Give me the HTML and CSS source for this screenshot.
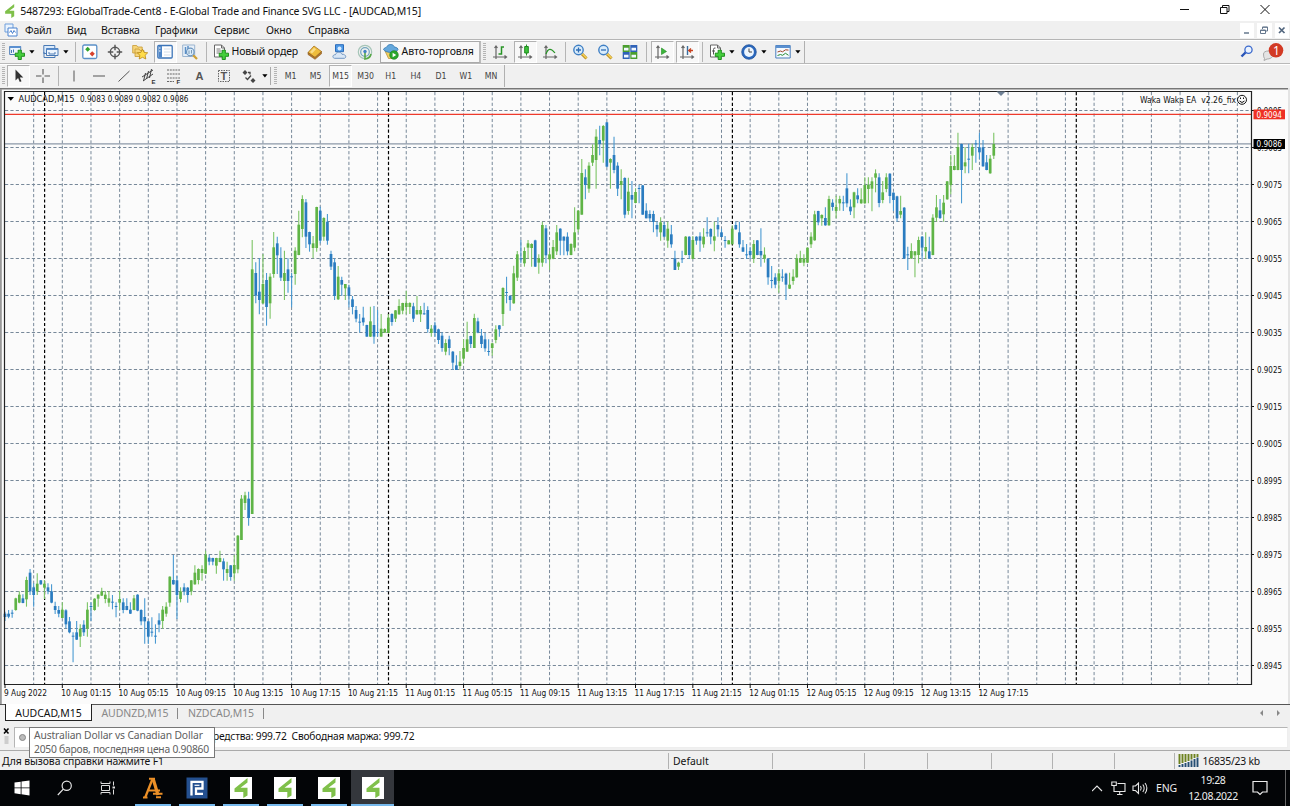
FILE: index.html
```html
<!DOCTYPE html>
<html lang="ru">
<head>
<meta charset="utf-8">
<title>EGlobalTrade-Cent8</title>
<link rel="stylesheet" href="styles.css">
</head>
<body>
<svg class="defs" width="0" height="0">
  <symbol id="logo" viewBox="0 0 22 22"><path d="M17.500 1 4.500 11.500v3.500h8.800v6l4.200-2.500V10.800H10.500l7-5.300z" fill="#7fc04a"/></symbol>
  <symbol id="arrow" viewBox="0 0 6 4"><path d="M0.300 0.300h5.200L2.900 3.600z" fill="#000"/></symbol>
  <symbol id="plus" viewBox="0 0 10 10"><path d="M3.500 .5h3v3h3v3h-3v3h-3v-3h-3v-3h3z" fill="#45cf3c" stroke="#178a17" stroke-width=".9"/></symbol>
  <symbol id="axes" viewBox="0 0 16 16"><path d="M4 2v13M1 13h13M2.500 4 4 2l1.500 2M12.500 11.500l2 1.500-2 1.500" fill="none" stroke="#666" stroke-width="1.200"/></symbol>
  <symbol id="lens" viewBox="0 0 16 16"><path d="m10 10 4.500 4.500" stroke="#b88a1c" stroke-width="3"/><path d="m10.200 9.800 4.300 4.300" stroke="#f3cf55" stroke-width="1.500"/><circle cx="6.500" cy="6" r="4.700" fill="#d9ecfb" stroke="#3f7fc4" stroke-width="1.400"/></symbol>
  <symbol id="doc" viewBox="0 0 16 16"><path d="M1.500 1h7l3 3v9h-10z" fill="#fff" stroke="#666"/><path d="M8.500 1v3h3" fill="none" stroke="#666"/></symbol>
</svg>

<header class="title">
  <svg class="title-logo" viewBox="0 0 22 22"><use href="#logo"/></svg>
  <span class="title-text">5487293: EGlobalTrade-Cent8 - E-Global Trade and Finance SVG LLC - [AUDCAD,M15]</span>
  <svg class="win-buttons" viewBox="0 0 120 21" fill="none" stroke="#111"><path d="M10 9.500h9M90.500 5l9 9M99.500 5l-9 9"/><path d="M50.500 7.500h6.500v6h-6.500zM52.500 7.500V5.500H59V11.500h-2"/></svg>
</header>

<nav class="menu">
  <svg class="menu-icon" viewBox="0 0 14 14"><path d="M1 1h8v8H1z" fill="#eaf3fd" stroke="#6f9fdc"/><path d="M4 5h9v8H4z" fill="#fff" stroke="#4b82cf"/><path d="m5.500 9.500 1.500-2 1.500 3 1.500-3 1.500 2" fill="none" stroke="#4b82cf"/></svg>
  <span class="m-file">Файл</span><span class="m-view">Вид</span><span class="m-insert">Вставка</span><span class="m-charts">Графики</span><span class="m-tools">Сервис</span><span class="m-window">Окно</span><span class="m-help">Справка</span>
  <div class="mdi">
    <b><svg viewBox="0 0 14 14"><path d="M4 10h5" stroke="#66788e" stroke-width="1.500"/></svg></b>
    <b><svg viewBox="0 0 14 14" fill="none" stroke="#66788e"><path d="M3.500 7h5v3.500h-5zM3.500 7.500h5M5.500 6V4h5v4H9M5.500 4.300h5"/></svg></b>
    <b><svg viewBox="0 0 14 14"><path d="m4 4.500 5.500 5.500M9.500 4.500 4 10" stroke="#52667e" stroke-width="1.700"/></svg></b>
  </div>
</nav>

<div class="toolbar t1">
  <i class="grip"></i>
  <div class="tb w22"><svg viewBox="0 0 16 16"><path d="M.7 2.500h11v8h-11z" fill="#eef5fd" stroke="#4a7ab5"/><path d="M.7 2h11v2h-11z" fill="#5b90d0"/><path d="M2.500 6v3M4.500 5.500v3" stroke="#4a7ab5"/><use href="#plus" x="5.500" y="5.500" width="10.500" height="10.500"/></svg></div>
  <div class="arr w12"><svg><use href="#arrow"/></svg></div>
  <div class="tb w22"><svg viewBox="0 0 16 16"><path d="M.8 1.500h11v8h-11z" fill="#dcebfb" stroke="#4a7ab5"/><path d="M3.500 4.500h11.500v7H3.500z" fill="#eef5fd" stroke="#4a7ab5"/><path d="M3.500 4.500h11.500v1.500H3.500z" fill="#5b90d0"/><path d="M1 8v5.500h11v-2M6 8v2h6V8" stroke="#4a7ab5" fill="none"/></svg></div>
  <div class="arr w12"><svg><use href="#arrow"/></svg></div>
  <i class="sep w35"></i>
  <div class="tb"><svg viewBox="0 0 16 16"><rect x=".8" y="1" width="14" height="13.500" rx="1.500" fill="#fff" stroke="#5b90c8" stroke-width="1.300"/><path d="m5.700 2.800 2.500 2.500-2.500 2.500-2.500-2.500z" fill="#31a42b"/><path d="m10.200 7.200 2.600 2.600-2.600 2.600-2.600-2.600z" fill="#d8412c"/></svg></div>
  <div class="tb"><svg viewBox="0 0 16 16" fill="none" stroke="#555" stroke-width="1.400"><circle cx="8" cy="8" r="4.700"/><path d="M8 0.800v5.500M8 9.700v5.500M.8 8h5.500M9.700 8h5.500"/></svg></div>
  <div class="tb"><svg viewBox="0 0 16 16"><path d="M.7 1.500h4l1 1.500h4.500v6H.7zM3 5h4l1 1.500h4v6H3z" fill="#f6d57a" stroke="#c89a33" stroke-width=".8"/><path d="m10.500 5.200 1.600 3.200 3.600.4-2.600 2.500.7 3.700-3.300-1.700-3.300 1.700.7-3.700-2.600-2.500 3.600-.4z" fill="#ffdc4a" stroke="#b88818" stroke-width=".8"/></svg></div>
  <div class="tb on"><svg viewBox="0 0 16 16"><rect x=".8" y="1.500" width="14.400" height="12.500" rx="1" fill="#fff" stroke="#3d75b8" stroke-width="1.300"/><path d="M1.500 2h3.500v11.500H1.500z" fill="#4f86c8"/><path d="M7 5h6.500M7 8h6.500M7 11h6.500" stroke="#d5dfea"/><path d="M2 4h1.500M2 7h1.500" stroke="#fff"/></svg></div>
  <div class="tb"><svg viewBox="0 0 16 16"><path d="M.7 1h12v11.500H.7z" fill="#e8f0f8" stroke="#9ab4cf"/><path d="M3.500 3v7M6 2v6" stroke="#5b90c8" stroke-width="1.500"/><path d="m11 11 4 4" stroke="#cfa033" stroke-width="2.300"/><circle cx="8.300" cy="8" r="3.800" fill="#d9ecfb" stroke="#6a93bd" stroke-width="1.200"/><path d="M7 6.500V10M9.500 6v3.500" stroke="#7b98b3"/></svg></div>
  <i class="sep w7"></i>
  <div class="tb w22"><svg viewBox="0 0 16 16"><use href="#doc" width="16" height="16"/><path d="M3.500 5h4M3.500 7h5M3.500 9h3" stroke="#777"/><use href="#plus" x="5.500" y="5.500" width="10.500" height="10.500"/></svg></div>
  <span class="order">Новый ордер</span>
  <div class="tb"><svg viewBox="0 0 16 16"><path d="M1 8.500 7 2l7.500 5.500-6.500 6z" fill="#eebd3d" stroke="#a87420" stroke-width=".8"/><path d="m1 8.500 7 5 6.500-6v2.300L8 15.300 1 10.500z" fill="#b5782a" stroke="#8a5a1c" stroke-width=".6"/><path d="m3 8 4-4.200 2 1.400-4 4.200z" fill="#f9dd8a"/></svg></div>
  <div class="tb"><svg viewBox="0 0 16 16"><path d="M3.500.7h8v7h-8z" fill="#4f9ae6" stroke="#2b6cba"/><circle cx="7.500" cy="4.500" r="2" fill="#d7ebff"/><path d="M2.500 14.300c-3-.8-1.300-4 .8-3.500 1-3.400 6-3.200 6.700-.5 2.600-.6 5.500 2.600 2.500 4z" fill="#d9e7f6" stroke="#7297c2"/></svg></div>
  <div class="tb"><svg viewBox="0 0 16 16" fill="none" stroke-width="1.200"><circle cx="8" cy="8" r="6.700" stroke="#a6c5b8"/><circle cx="8" cy="8" r="4.300" stroke="#71a5bb"/><path d="M8 8v7q5-.5 6-5" stroke="#57a846" stroke-width="1.600"/><circle cx="8" cy="7.500" r="1.700" fill="#4182c4" stroke="none"/></svg></div>
  <div class="auto"><svg viewBox="0 0 16 16"><path d="m2 7 3.500 7.500h5L14 7z" fill="#f1cf63" stroke="#b28a2c" stroke-width=".7"/><path d="M.5 5.500c1-2.500 3-1.500 3.500-3 1.500-3 6.500-2.300 7 0 .7 1.300 3.500.2 4 3-1 3.500-12 4.200-14.500 0z" fill="#65a8dc" stroke="#2f74ad" stroke-width=".8"/><circle cx="11" cy="11" r="4.300" fill="#2aa72d" stroke="#168019" stroke-width=".6"/><path d="m9.600 8.700 3.600 2.300-3.600 2.300z" fill="#fff"/></svg><span>Авто-торговля</span></div>
  <i class="grip mid"></i>
  <div class="tb"><svg viewBox="0 0 16 16"><use href="#axes"/><path d="M6.500 10h3V3h2.500" stroke="#279425" fill="none" stroke-width="1.500"/></svg></div>
  <div class="tb on"><svg viewBox="0 0 16 16"><use href="#axes"/><path d="M9.500.500v11" stroke="#279425"/><path d="M7.700 2.500h3.600v6.500H7.700z" fill="#3fc23b" stroke="#1f8a1f"/></svg></div>
  <div class="tb"><svg viewBox="0 0 16 16"><use href="#axes"/><path d="M4 10c2-6 5-6 9-1" stroke="#279425" fill="none" stroke-width="1.200"/></svg></div>
  <i class="sep w5"></i>
  <div class="tb"><svg viewBox="0 0 16 16"><use href="#lens"/><path d="M4 6h5M6.500 3.500v5" stroke="#2f6db5" stroke-width="1.300"/></svg></div>
  <div class="tb"><svg viewBox="0 0 16 16"><use href="#lens"/><path d="M4 6h5" stroke="#2f6db5" stroke-width="1.300"/></svg></div>
  <div class="tb"><svg viewBox="0 0 16 16"><path d="M.7 1h7v7h-7zM8.300 8h7v7h-7z" fill="#4a9e2e"/><path d="M8.300 1h7v7h-7zM.7 8h7v7h-7z" fill="#2f62b8"/><path d="M2 3.700h4.500v2.800H2zM9.500 3.700H14v2.800H9.500zM2 10.700h4.500v2.800H2zM9.500 10.700H14v2.800H9.500z" fill="#f2f8ff"/></svg></div>
  <i class="sep w7"></i>
  <div class="tb on"><svg viewBox="0 0 16 16"><use href="#axes"/><path d="m7.500 4 5 3.500-5 3z" fill="#3bb53a" stroke="#1f8a1f" stroke-width=".6"/></svg></div>
  <div class="tb on"><svg viewBox="0 0 16 16"><use href="#axes"/><path d="M8.500 2v9" stroke="#3b6f9f" stroke-width="1.400"/><path d="M14 6.500h-4M12 4.500l-2.300 2 2.300 2" stroke="#c8411f" fill="none" stroke-width="1.300"/></svg></div>
  <i class="sep w65"></i>
  <div class="tb w22"><svg viewBox="0 0 16 16"><use href="#doc" width="16" height="16"/><path d="M6.500 4q-2-.5-2 1.500v5M3 7h3" stroke="#555" fill="none"/><use href="#plus" x="5.500" y="5.500" width="10.500" height="10.500"/></svg></div>
  <div class="arr w10"><svg><use href="#arrow"/></svg></div>
  <div class="tb w22"><svg viewBox="0 0 16 16"><circle cx="8" cy="8" r="7.300" fill="#2b68bd" stroke="#1d4d95" stroke-width=".7"/><circle cx="8" cy="8" r="4.900" fill="#edf6ff"/><path d="M8 4.500V8h3" stroke="#444" fill="none"/></svg></div>
  <div class="arr w12"><svg><use href="#arrow"/></svg></div>
  <div class="tb w22"><svg viewBox="0 0 16 16"><path d="M.8 1.500h14.400v12.500H.8z" fill="#f5faff" stroke="#4b7fbd"/><path d="M.8 1.500h14.400v2.500H.8z" fill="#5b90d0"/><path d="m2.500 8 3-1 2 .8 3-2 3 .3" stroke="#a04328" fill="none"/><path d="m2.500 11.500 3-1 2 .8 3-2 3 2" stroke="#278b34" fill="none"/></svg></div>
  <div class="arr w10"><svg><use href="#arrow"/></svg></div>
  <i class="end"></i>
  <svg class="alerts" viewBox="0 0 50 24"><path d="m2.500 16.500 5-5" stroke="#2a55b8" stroke-width="2.400"/><circle cx="9.500" cy="9.700" r="3.600" fill="#eaf3ff" stroke="#3b69cc" stroke-width="1.300"/><path d="M24.500 14c0-4 9-4 9.500 0s-4 5-6 5l-3 1.500 .5-2q-1-1-1-4.500z" fill="#e4e4e4" stroke="#aaa"/><circle cx="37" cy="10.300" r="7.300" fill="#d23a24"/><text x="34" y="14.600" font-size="12" fill="#fff">1</text></svg>
</div>

<div class="toolbar t2">
  <i class="grip"></i>
  <div class="tb on"><svg viewBox="0 0 16 16"><path d="M4.500 1.500v11l2.600-2.400 1.700 4 1.700-.8-1.700-3.800h3.500z" fill="#333"/></svg></div>
  <div class="tb"><svg viewBox="0 0 16 16" stroke="#555" stroke-width="1.100"><path d="M8 1v5.500M8 9.500V15M1 8h5.500M9.500 8H15"/></svg></div>
  <i class="sep w6"></i>
  <div class="tb"><svg viewBox="0 0 16 16" stroke="#555"><path d="M8 2.500v11"/></svg></div>
  <div class="tb"><svg viewBox="0 0 16 16" stroke="#555"><path d="M2 8h12"/></svg></div>
  <div class="tb"><svg viewBox="0 0 16 16" stroke="#555"><path d="M2.500 13.500 13.500 3"/></svg></div>
  <div class="tb"><svg viewBox="0 0 16 16" stroke="#444" fill="none"><path d="m1 9 11-7M2 13l10-7M4.500 5l-2 8M7.500 3l-2 8M10.500 1l-2 9"/><text x="10.500" y="15.500" class="sub">E</text></svg></div>
  <div class="tb"><svg viewBox="0 0 16 16" stroke="#666" fill="none"><path d="M1 2h13M1 6h13M1 10h13M1 13.500h7" stroke-dasharray="2 .8"/><text x="10.500" y="16" class="sub">F</text></svg></div>
  <div class="tb"><svg viewBox="0 0 16 16"><text x="4.500" y="12.300" class="glyph">A</text></svg></div>
  <div class="tb"><svg viewBox="0 0 16 16"><path d="M2.500 2.500h11v11h-11z" fill="none" stroke="#666" stroke-dasharray="1.500 1"/><text x="4.600" y="12" class="glyph">T</text></svg></div>
  <div class="tb"><svg viewBox="0 0 16 16"><path d="m4 2 2.500 2.500L4 7 1.500 4.500zM12 10l2.500 2.500L12 15l-2.500-2.500z" fill="#444"/><path d="m4.500 9.500 2 2 3.500-4M7 4.500h2v2" stroke="#444" fill="none" stroke-width="1.300"/></svg></div>
  <div class="arr w9"><svg><use href="#arrow"/></svg></div>
  <i class="grip tf"></i>
  <span>M1</span><span>M5</span><span class="on">M15</span><span>M30</span><span>H1</span><span>H4</span><span>D1</span><span>W1</span><span>MN</span>
  <i class="end"></i>
</div>

<main class="chart"><svg id="chart" width="1290" height="616" viewBox="0 88 1290 616"></svg></main>

<div class="tabs">
  <span class="tab active">AUDCAD,M15</span><span class="tab second">AUDNZD,M15</span><span class="tab third">NZDCAD,M15</span>
  <svg class="tab-arrows" viewBox="0 0 30 10"><path d="M5 2v6L2 5zM19 2v6l3-3z" fill="#888"/></svg>
</div>

<section class="terminal">
  <svg class="close" viewBox="0 0 14 24"><path d="m4 1.500 4.500 5M8.500 1.500 4 6.500" stroke="#000" stroke-width="1.500"/><path d="M4.500 10h4M4.500 12h4M4.500 14h4M4.500 16h4" stroke="#aaa"/></svg>
  <div class="balance"><i class="dot"></i><span>редства: 999.72&nbsp; Свободная маржа: 999.72</span></div>
  <div class="tip"><span class="tip-a">Australian Dollar vs Canadian Dollar</span><span class="tip-b">2050 баров, последняя цена 0.90860</span></div>
</section>

<footer class="status">
  <span class="hint">Для вызова справки нажмите F1</span>
  <span class="cell profile">Default</span><i class="cell c1"></i><i class="cell c2"></i><i class="cell c3"></i><i class="cell c4"></i><i class="cell c5"></i><i class="cell c6"></i>
  <div class="cell net"><svg viewBox="0 0 22 13"><path d="M1.500 0v10M4.500 0v9M7.500 0v8M10.500 0v7M13.500 0v5.500M16.500 0v4M19.500 0v3" stroke="#6d8220" stroke-width="1.900"/><path d="M1.500 11v2M4.500 10v3M7.500 9v4M10.500 8v5M13.500 6.500V13M16.500 5v8M19.500 3.500V13" stroke="#244d73" stroke-width="1.900"/></svg><span>16835/23 kb</span></div>
</footer>

<div class="taskbar">
  <div class="task sys win"><svg viewBox="0 0 16 16" fill="#fff"><path d="M.5 2.600 6.700 1.700v5.800H.5zM7.500 1.600 15.500.4v7.100h-8zM.5 8.300h6.200v5.900L.5 13.300zM7.500 8.300h8v7.100l-8-1.100z"/></svg></div>
  <div class="task sys"><svg viewBox="0 0 16 16" fill="none" stroke="#e6e6e6" stroke-width="1.200"><circle cx="9.700" cy="5.700" r="4.600"/><path d="M6.300 9.200.8 15"/></svg></div>
  <div class="task sys"><svg viewBox="0 0 16 16" fill="none" stroke="#ddd"><path d="M1 1.500v2h9v-2M1 14.500v-2h9v2M1.500 5.500h8v5h-8zM13.500 1.500v4M13.500 9.500v5"/><path d="M12.500 7.500h2.500" stroke-width="2"/></svg></div>
  <div class="task run"><svg class="big" viewBox="0 0 22 22" fill="none" stroke="#ec9027"><path d="M1 20.500h4.500M7 1.800h6" stroke-width="2"/><path d="M3.200 20.500 10.300 2.500" stroke-width="2.300"/><path d="M11.200 2 16 18" stroke-width="3.200"/><path d="M7 13.500h11M11 16.800h9.500M14 20.300h5" stroke-width="1.900"/></svg></div>
  <div class="task run"><svg class="big" viewBox="0 0 22 22"><path d="M.5.500h21v21H.5z" fill="#24508f"/><path d="M5.500 18.500V4.800h11v6.700h-6.500v5.300H17" fill="none" stroke="#fff" stroke-width="2.300"/><path d="M8.500 8.300h5" stroke="#fff" stroke-width="1.200"/></svg></div>
  <div class="task run"><svg class="big white" viewBox="0 0 22 22"><use href="#logo"/></svg></div>
  <div class="task run"><svg class="big white" viewBox="0 0 22 22"><use href="#logo"/></svg></div>
  <div class="task run"><svg class="big white" viewBox="0 0 22 22"><use href="#logo"/></svg></div>
  <div class="task run current"><svg class="big white" viewBox="0 0 22 22"><use href="#logo"/></svg></div>
  <div class="tray">
    <svg class="tray-icons" viewBox="0 0 62 20" fill="none" stroke="#e6e6e6" stroke-width="1.100"><path d="m0 13 5-5 5 5"/><path d="M25.500 5.500H33v8H22v-4M25 16.500h5.500M27.700 13.500v3M19.800 4h4.500v3.500h-4.500zM22 7.500v2"/><path d="M41 8h2.500L46.500 5v10.500L43.500 12.500H41zM48.500 8q1.500 2.200 0 4.500M50.800 6.500q2.800 3.800 0 7.500M53 5q3.800 5 0 10.500"/></svg>
    <span class="lang">ENG</span>
    <div class="clock"><span>19:28</span><span>12.08.2022</span></div>
    <svg class="note" viewBox="0 0 16 16" fill="none" stroke="#eee" stroke-width="1.200"><path d="M1 1.500h14v10.500h-4.500L8 14.500 5.500 12H1z"/></svg>
  </div>
</div>
<script src="chart.js"></script>
</body>
</html>
```
FILE: styles.css
```css
* { box-sizing: border-box; }
body { margin: 0; width: 1290px; height: 806px; overflow: hidden; display: flex; flex-direction: column; background: #f0f0f0; color: #111; font-family: "Noto Sans", "Open Sans", sans-serif; font-size: 10.5px; }
span { white-space: nowrap; }
.defs { position: absolute; }
.title { height: 21px; flex: none; background: #fff; display: flex; align-items: center; }
.title-logo { width: 16px; height: 16px; margin-left: 2px; }
.title-text { margin-left: 3px; width: 402px; font-size: 10.5px; letter-spacing: -0.155px; color: #111; }
.win-buttons { width: 120px; height: 21px; margin-left: 749px; flex: none; }
.menu { height: 19px; flex: none; display: flex; align-items: center; border-bottom: 1px solid #b5b5b5; font-size: 10.5px; letter-spacing: -0.15px; }
.menu-icon { width: 14px; height: 14px; margin-left: 4px; margin-right: 7px; }
.m-file { width: 42px; } .m-view { width: 34px; } .m-insert { width: 54px; } .m-charts { width: 59px; } .m-tools { width: 52px; } .m-window { width: 42px; } .m-help { width: 60px; }
.mdi { margin-left: auto; display: flex; gap: 3px; padding-right: 1px; }
.mdi b { width: 14.500px; height: 15px; background: #fff; }
.mdi svg { width: 14px; height: 14px; display: block; }
.toolbar { flex: none; display: flex; align-items: center; border-top: 1px solid #fff; }
.t1 { height: 24px; border-bottom: 1px solid #b9b9b9; }
.t2 { height: 24px; padding-bottom: 1px; }
.grip { flex: none; width: 6px; height: 18px; background: repeating-linear-gradient(#b4b4b4 0 1px, #f0f0f0 1px 2px) 2px 0 / 3px 100% no-repeat; }
.grip.mid { width: 6.500px; }
.grip.tf { width: 8px; border-left: 1px solid #aaa; background-position: 3px 0; }
.tb { flex: none; width: 25px; height: 22px; display: flex; align-items: center; justify-content: center; }
.tb svg { width: 16px; height: 16px; }
.tb.on { border: 1px solid #b2b2b2; border-right-color: #fff; border-bottom-color: #fff; background: #f8f8f8; width: 23px; margin: 0 1px; }
.arr { flex: none; display: flex; align-items: center; padding-left: 1px; }
.arr svg { width: 6px; height: 4px; }
.w22 { width: 22px; } .w12 { width: 12px; } .w10 { width: 10px; } .w9 { width: 9px; } .w7 { width: 7px; } .w5 { width: 5px; } .w6 { width: 6px; } .w65 { width: 6.500px; } .w35 { width: 3.500px; }
.sep { flex: none; height: 20px; background: linear-gradient(#b5b5b5, #b5b5b5) center / 1px 100% no-repeat; }
.order { width: 71px; font-size: 10.500px; letter-spacing: -.15px; margin-top: -2px; }
.auto { flex: none; width: 101.500px; margin-left: 2px; height: 22px; border: 1px solid #aaa; border-right: 2px solid #bbb; background: #f8f8f8; display: flex; align-items: center; }
.auto svg { width: 16px; height: 16px; margin-left: 2px; margin-right: 3px; }
.auto span { font-size: 10.500px; margin-top: -2px; letter-spacing: -.05px; }
.end { width: 1px; height: 22px; background: #b0b0b0; }
.alerts { width: 50px; height: 24px; margin-left: 434px; flex: none; }
.t2 > span { width: 23px; margin: 0 1.040px; height: 22px; text-align: center; font: 8.700px/22px "DejaVu Sans", sans-serif; font-stretch: condensed; color: #444; }
.t2 > span.on { border: 1px solid #b2b2b2; border-right-color: #fff; border-bottom-color: #fff; background: #f8f8f8; line-height: 20px; }
.t2 .tb.on { margin-right: 0; margin-left: 1px; }
.sub { font: bold 6px "Liberation Sans", sans-serif; fill: #333; stroke: none; }
.glyph { font: bold 11px "Liberation Sans", sans-serif; fill: #555; }
.chart { height: 616px; flex: none; }
.chart svg { display: block; }
.chart text { font-family: "DejaVu Sans"; font-stretch: condensed; font-size: 8.700px; fill: #111; }
.tabs { flex: none; height: 20px; display: flex; align-items: flex-start; border-top: 1.500px solid #555; position: relative; padding-left: 5px; margin-bottom: 3px; }
.tab { height: 16px; line-height: 17px; color: #888; font-size: 10.500px; letter-spacing: -.05px; text-align: center; }
.tab.active { width: 87px; background: #fff; border: 1.500px solid #222; border-top: 0; color: #111; line-height: 18px; height: 17px; margin-top: -1px; }
.tab.second, .tab.third { width: 86px; background: linear-gradient(#888, #888) right 3px / 1px 11px no-repeat; }
.tab-arrows { width: 30px; height: 10px; margin-left: auto; margin-top: 3px; margin-right: 2px; }
.terminal { flex: none; height: 24px; display: flex; position: relative; border-bottom: 1px solid #aaa; }
.close { width: 14px; height: 24px; flex: none; }
.balance { width: 1274px; height: 21px; background: #fff; border: 1px solid #b5b5b5; border-right-color: #eee; border-bottom-color: #eee; display: flex; align-items: center; font-size: 10.200px; }
.dot { width: 7px; height: 7px; border-radius: 50%; border: 1.500px solid #888; background: #bbb; margin-left: 4px; }
.balance span { margin-left: 187px; margin-top: -3px; letter-spacing: -.18px; }
.tip { position: absolute; left: 29px; top: 0; width: 186px; height: 31px; background: #fff; border: 1px solid #777; display: flex; flex-direction: column; line-height: 13.500px; padding: 1px 4px; color: #606060; font-size: 10.300px; z-index: 2; }
.tip-a { letter-spacing: -.13px; }
.tip-b { letter-spacing: -.23px; }
.status { flex: none; height: 19px; display: flex; align-items: center; font-size: 10.400px; }
.hint { width: 668px; padding-left: 2px; letter-spacing: -.1px; }
.cell { height: 16px; line-height: 16px; border-left: 1.500px solid #b2b2b2; }
.profile { width: 104px; padding-left: 4px; } .c1 { width: 92px; } .c2 { width: 63px; } .c3 { width: 64px; } .c4 { width: 61px; } .c5 { width: 62px; } .c6 { width: 59.500px; }
.net { display: flex; align-items: center; letter-spacing: -.25px; }
.net svg { width: 22px; height: 13px; margin: 0 3px; }
.taskbar { flex: none; height: 36px; background: #030507; display: flex; align-items: stretch; }
.task { width: 44px; display: flex; align-items: center; justify-content: center; }
.task.sys { width: 43.500px; }
.task.win { width: 43px; }
.task svg { width: 16px; height: 16px; }
.task svg.big { width: 22px; height: 22px; }
.task svg.white { background: #fff; }
.task.run { background: linear-gradient(#76b9ed, #76b9ed) center bottom / 36px 2px no-repeat; }
.task.current { background: linear-gradient(#76b9ed, #76b9ed) center bottom / 43px 2px no-repeat, #34373c; width: 43px; }
.task:nth-child(4) { margin-left: 1px; }
.tray { margin-left: auto; display: flex; align-items: center; color: #eee; border-right: 1px solid #666; width: 194px; margin-right: 4px; font-size: 10.500px; }
.tray-icons { width: 62px; height: 20px; }
.lang { width: 29px; margin-left: 2px; letter-spacing: -.2px; }
.clock { display: flex; flex-direction: column; align-items: center; line-height: 16px; width: 56px; letter-spacing: -.4px; margin-top: -1px; }
.note { width: 16px; height: 16px; margin-left: 11px; }
```
FILE: chart.js
```js
// Candles: direction, high, body top, body bottom, low; v is in thirds of a pixel below y0.
const blocks = [
  [0, 540, `b215,221,231,243 b210,221,230,235 b209,218,221,233 g173,175,210,212 g154,164,188,190 b163,175,189,190 g110,120,178,200 b87,98,154,165 b130,142,165,200 g100,131,154,165 b120,121,133,134 g120,131,143,177 b130,142,154,163 b133,154,188,190 b185,198,210,222 b198,210,221,232 g187,209,234,235 b208,211,253,265 b231,244,277,280 b277,287,290,367 b243,277,299,300 g253,266,290,321 b241,254,277,288 g187,209,266,290 b187,198,201,243 g175,176,210,212 g163,164,176,200 g143,154,167,168 g153,164,177,190 g153,175,188,200 b165,185,188,208 b187,198,201,232 g152,177,188,210 b175,187,210,220 b175,198,210,211 b187,209,221,222 g165,175,210,211 b163,164,212,214 b208,210,244,256 b175,231,244,311 b243,244,290,312 b232,275,278,290 b253,287,290,311 b220,241,254,277 g198,209,243,266 g187,200,221,230 g109,110,188,200 b45,120,133,134 b108,121,165,237 g142,154,177,187 b130,142,154,166 b141,143,165,188 g120,121,154,166 g76,98,133,134 g85,87,120,133 g76,87,99,122 g32,44,101,102 b43,53,65,76 b53,54,65,76 g53,54,77,101 g32,54,66,67 b55,64,88,122 g65,87,99,122 b75,76,111,122 g45,75,100,122`],
  [65, 380, `g465,467,568,580 g345,356,480,480 g335,346,369,390 b335,356,414,437`],
  [69, 180, `g180,268,1002,1002 b247,279,347,370 b235,335,360,403 g222,312,370,372 b279,300,381,437 g280,290,370,416 g156,202,282,293 b170,190,226,282 b202,234,293,303 g212,279,303,360 b235,268,303,338 b279,289,292,382 g202,212,282,314 g92,134,225,226 g46,57,147,172 b57,67,170,204 b155,156,193,215 g168,190,204,235 g80,81,204,215 b80,92,182,190 g112,114,170,182 b102,125,182,194 b212,222,260,270 b235,247,348,360 g258,290,358,360 b290,300,314,348 g312,312,325,360 b314,322,348,382 b348,358,381,403 b378,390,416,427 b402,425,428,458 b380,413,427,437 b434,435,470,470 g380,424,470,471 b378,435,470,491 b390,456,459,470 g402,446,470,470 g445,447,458,459 g402,413,459,459 b400,402,426,437 g390,391,416,426 g358,378,403,404 g368,369,392,403 g332,369,381,403 g367,369,381,402 b368,379,416,426 g348,390,403,404 g378,390,403,426 b368,400,403,404 b379,390,447,458 g435,446,459,470 b425,436,459,470 b446,448,480,492 b457,467,504,515 g478,489,515,526 b467,478,504,526 b513,515,548,570 b526,556,570,570 g513,545,558,570 g478,504,536,548`],
  [129, 200, `g365,418,455,455 b407,408,432,444 g341,354,444,444 b353,364,398,400 b387,407,432,444 b398,418,445,455 b418,453,456,467 g428,430,444,467 g376,388,420,430 b375,376,388,410 g262,264,342,378 b230,276,279,310 b285,288,300,332 g197,220,310,311 g153,163,233,243 b120,175,178,190 g142,153,190,200 g120,130,143,176 g130,132,144,200 b119,121,200,201 g163,175,188,221 g65,75,188,200 b75,85,166,190 g153,163,178,210 g120,141,176,178 g75,97,154,165 b85,86,122,166 b109,110,122,166 b97,110,154,166 g130,132,165,166 g22,97,143,154 g30,32,88,97`],
  [161, 110, `g147,189,314,314 b178,202,225,268 g157,167,236,248 g103,135,158,168 g58,80,150,236 b47,90,102,136 g45,48,92,158 b36,37,170,172 g145,147,158,236 b80,135,180,190 b157,167,236,258 g178,213,225,268 b202,204,314,325 g203,245,303,314 b213,255,269,325 g235,246,279,280 b224,234,237,280 b225,226,314,314 b280,302,325,325 b301,312,325,336 b302,312,336,367 b335,345,358,380 g322,337,367,392 b335,345,380,382 g335,356,392,413 b345,373,403,413 b422,445,480,480 g455,458,470,480 b422,445,448,459 g378,380,435,436 b379,380,435,447 g378,390,447,447 b379,380,392,404 b367,379,392,425 g355,380,403,413 b322,367,370,380 b355,357,380,403 g335,379,392,424 b322,345,358,380 b356,367,381,382 b378,390,393,413 g390,391,403,403 g346,356,403,403 b335,345,358,359 b335,367,403,413 b390,412,425,426 b402,433,436,447 b410,423,435,447 g390,402,446,459 b390,391,435,436`],
  [211, 160, `b205,273,286,320 g262,284,296,308 b294,296,352,374 b318,360,363,385 b340,352,374,385 g328,340,363,398 b328,350,353,365 b338,341,374,420 g338,374,386,387 g328,350,363,374 g283,295,352,353 g272,294,308,309 g283,295,308,319 g262,263,308,309 g217,230,253,264 g152,163,241,242 b152,153,187,196 g163,165,175,197 b142,174,196,197 g107,117,196,197 b118,128,141,152 g107,141,153,175 g107,117,130,152 b107,127,130,153 b40,85,130,142 b118,140,154,165 g95,97,142,175 b85,106,118,130 g85,118,130,131 g52,75,130,131 g52,74,87,130 g52,64,86,154 g28,40,53,97 b40,52,129,142 g63,97,120,130 g40,52,87,97 b40,41,108,130 b97,98,120,153 b107,109,175,185 g107,153,164,175 b141,143,296,297`],
  [252, 120, `b380,403,406,450 g370,393,415,417 g393,394,406,472 g350,360,405,430 b348,350,383,417 g337,381,394,417 b350,394,416,417 g283,293,405,406 g225,262,293,305 b237,271,294,297 g225,248,283,305 g183,184,238,239 g105,138,195,223 g105,138,150,151 g38,81,150,151 b71,72,150,250 g81,127,139,160 b71,116,119,160 g71,81,107,150 b60,70,73,128 b38,82,97,118 b60,82,139,140 b105,127,150,151 g105,116,160,161 g38,72,107,117`]
];
const barX = i => 5 + i * 3.5825;
let out = '<rect x="0" y="88" width="1290" height="616" fill="#fbfbfb"/>' +
  '<path d="M0 88.700H1289" stroke="#777" stroke-width="1.600"/><path d="M.8 89V704" stroke="#999" stroke-width="2"/><path d="M1289 88v616" stroke="#e4e4e4" stroke-width="2"/>';
const line = (x1, y1, x2, y2, attrs) => `<path d="M${x1} ${y1}L${x2} ${y2}" ${attrs}/>`;
const text = (x, y, s, w, extra = '') => `<text x="${x}" y="${y}" textLength="${w}" lengthAdjust="spacingAndGlyphs" ${extra}>${s}</text>`;
const dash = 'stroke-dasharray="3.2 2.17" stroke-width="1"';

for (let k = 0; k < 16; k++) {
  const y = 110.5 + k * 37;
  out += line(5, y, 1251, y, `stroke="#778899" ${dash}`) + line(1251, y, 1254, y, 'stroke="#111"');
  out += text(1257, (y + 3.2).toFixed(1), ((9095 - k * 10) / 10000).toFixed(4), 25);
}
for (let i = 8; barX(i) < 1250; i += 8) {
  out += line(barX(i), 92, barX(i), 684, `stroke="#778899" ${dash}`);
}
for (const x of [44.6, 388.5, 732.4, 1076.3]) {
  out += line(x, 92, x, 684, 'stroke="#000" stroke-width="1.200" stroke-dasharray="3.2 2.17"');
}
out += line(5, 143.9, 1251, 143.9, 'stroke="#8c99a8" stroke-width="1.200"');

for (const [start, y0, data] of blocks) {
  data.split(' ').forEach((c, k) => {
    const [hi, top, bot, lo] = c.slice(1).split(',').map(v => y0 + v / 3);
    const x = barX(start + k);
    const up = c[0] === 'g';
    out += line(x, hi, x, lo, `stroke="${up ? '#7cc465' : '#4a9ad2'}" stroke-width="1.100"`);
    out += `<rect x="${x - 1.35}" y="${top}" width="2.700" height="${Math.max(bot - top, 1)}" fill="${up ? '#5fb446' : '#2a7cc0'}"/>`;
  });
}
out += line(5, 114.3, 1251, 114.3, 'stroke="#ee3a2c" stroke-width="1.200"');
out += '<path d="M4.500 91.500H1251.500V684.500H4.500z" fill="none" stroke="#222" stroke-width="1.200"/>';
out += '<path d="M996.500 91.500h9l-4.500 4.500z" fill="#6f8196"/>';
out += '<path d="M7.500 97h6.500l-3.200 3.800z" fill="#000"/>' + text(18.5, 101.7, 'AUDCAD,M15', 56) + text(80, 101.7, '0.9083 0.9089 0.9082 0.9086', 108.5);
out += text(1140, 102.5, 'Waka Waka EA&#160; v2.26_fix', 96);
out += '<g fill="none" stroke="#111"><circle cx="1242" cy="99.800" r="4.500"/><path d="M1239.500 101q2.500 3 5 0M1240.500 97.500v1.500M1243.500 97.500v1.500"/></g>';
out += '<rect x="1253.500" y="109.500" width="31.500" height="9.800" fill="#ee3124"/>' + text(1256.5, 117.6, '0.9094', 25.5, 'style="fill:#fff"');
out += '<rect x="1253.500" y="139" width="31.500" height="10" fill="#000"/>' + text(1256.5, 147.2, '0.9086', 25.5, 'style="fill:#fff"');
out += text(4, 695.7, '9 Aug 2022', 43) + line(5, 684, 5, 688, 'stroke="#111"');
for (let k = 0; k < 17; k++) {
  const day = 10 + Math.floor(k / 6);
  const hour = String(1 + (k % 6) * 4).padStart(2, '0');
  const x = barX(16 + k * 16);
  out += line(x, 684, x, 688, 'stroke="#111"') + text((x - 1).toFixed(1), 695.7, `${day} Aug ${hour}:15`, 50);
}
document.getElementById('chart').innerHTML = out;
```
